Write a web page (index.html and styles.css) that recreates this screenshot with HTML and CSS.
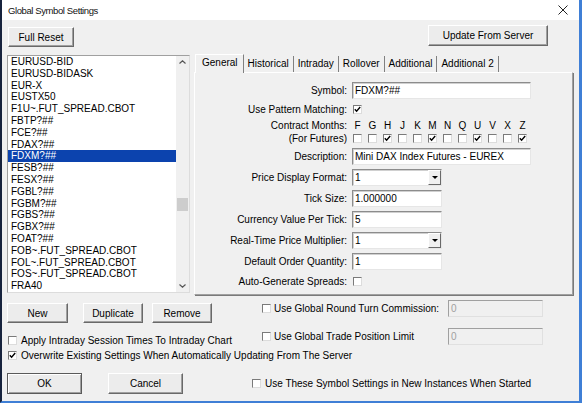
FILE: index.html
```html
<!DOCTYPE html>
<html>
<head>
<meta charset="utf-8">
<title>Global Symbol Settings</title>
<link rel="stylesheet" href="styles.css">
</head>
<body>
<div class="window">
  <div class="titlebar">
    <span class="title">Global Symbol Settings</span>
    <svg class="close" width="10" height="10" viewBox="0 0 10 10"><path d="M0.5 0.5L9.5 9.5M9.5 0.5L0.5 9.5" stroke="#222" stroke-width="1" fill="none"/></svg>
  </div>
  <div class="client">
    <div class="toprow">
      <div class="btn btn-reset">Full Reset</div>
      <div class="btn btn-update">Update From Server</div>
    </div>
    <div class="mainrow">
      <div class="listbox">
        <div class="items">
          <div class="item">EURUSD-BID</div>
          <div class="item">EURUSD-BIDASK</div>
          <div class="item">EUR-X</div>
          <div class="item">EUSTX50</div>
          <div class="item">F1U~.FUT_SPREAD.CBOT</div>
          <div class="item">FBTP?##</div>
          <div class="item">FCE?##</div>
          <div class="item">FDAX?##</div>
          <div class="item sel">FDXM?##</div>
          <div class="item">FESB?##</div>
          <div class="item">FESX?##</div>
          <div class="item">FGBL?##</div>
          <div class="item">FGBM?##</div>
          <div class="item">FGBS?##</div>
          <div class="item">FGBX?##</div>
          <div class="item">FOAT?##</div>
          <div class="item">FOB~.FUT_SPREAD.CBOT</div>
          <div class="item">FOL~.FUT_SPREAD.CBOT</div>
          <div class="item">FOS~.FUT_SPREAD.CBOT</div>
          <div class="item">FRA40</div>
        </div>
        <div class="vscroll">
          <div class="arrow-box"><svg width="7" height="4" viewBox="0 0 7 4"><path d="M0.5 3.5L3.5 0.8L6.5 3.5" stroke="#555" stroke-width="1.2" fill="none"/></svg></div>
          <div class="track"><div class="thumb"></div></div>
          <div class="arrow-box"><svg width="7" height="4" viewBox="0 0 7 4"><path d="M0.5 0.5L3.5 3.2L6.5 0.5" stroke="#555" stroke-width="1.2" fill="none"/></svg></div>
        </div>
      </div>
      <div class="tabs">
        <div class="tabstrip">
          <div class="tab active">General</div>
          <div class="tab">Historical</div>
          <div class="tab">Intraday</div>
          <div class="tab">Rollover</div>
          <div class="tab">Additional</div>
          <div class="tab">Additional 2</div>
        </div>
        <div class="panel">
          <div class="form">
            <div class="lbl">Symbol:</div>
            <div class="val"><div class="field wide">FDXM?##</div></div>

            <div class="lbl">Use Pattern Matching:</div>
            <div class="val"><span class="cb cb-form"><svg width="7" height="7" viewBox="0 0 7 7"><path d="M0.8 3.2L2.6 5.2L6.2 1" stroke="#000" stroke-width="1.4" fill="none"/></svg></span></div>

            <div class="lbl lbl-months"><div>Contract Months:</div><div>(For Futures)</div></div>
            <div class="months">
              <span>F</span><span>G</span><span>H</span><span>J</span><span>K</span><span>M</span><span>N</span><span>Q</span><span>U</span><span>V</span><span>X</span><span>Z</span>
              <span class="cb"></span>
              <span class="cb"></span>
              <span class="cb"><svg width="7" height="7" viewBox="0 0 7 7"><path d="M0.8 3.2L2.6 5.2L6.2 1" stroke="#000" stroke-width="1.4" fill="none"/></svg></span>
              <span class="cb"></span>
              <span class="cb"></span>
              <span class="cb"><svg width="7" height="7" viewBox="0 0 7 7"><path d="M0.8 3.2L2.6 5.2L6.2 1" stroke="#000" stroke-width="1.4" fill="none"/></svg></span>
              <span class="cb"></span>
              <span class="cb"></span>
              <span class="cb"><svg width="7" height="7" viewBox="0 0 7 7"><path d="M0.8 3.2L2.6 5.2L6.2 1" stroke="#000" stroke-width="1.4" fill="none"/></svg></span>
              <span class="cb"></span>
              <span class="cb"></span>
              <span class="cb"><svg width="7" height="7" viewBox="0 0 7 7"><path d="M0.8 3.2L2.6 5.2L6.2 1" stroke="#000" stroke-width="1.4" fill="none"/></svg></span>
            </div>

            <div class="lbl">Description:</div>
            <div class="val"><div class="field wide">Mini DAX Index Futures - EUREX</div></div>

            <div class="lbl">Price Display Format:</div>
            <div class="val"><div class="combo"><span class="combo-text">1</span><span class="combo-btn"><span class="tri"></span></span></div></div>

            <div class="lbl">Tick Size:</div>
            <div class="val"><div class="field narrow">1.000000</div></div>

            <div class="lbl">Currency Value Per Tick:</div>
            <div class="val"><div class="field narrow">5</div></div>

            <div class="lbl">Real-Time Price Multiplier:</div>
            <div class="val"><div class="combo"><span class="combo-text">1</span><span class="combo-btn"><span class="tri"></span></span></div></div>

            <div class="lbl">Default Order Quantity:</div>
            <div class="val"><div class="field narrow">1</div></div>

            <div class="lbl">Auto-Generate Spreads:</div>
            <div class="val"><span class="cb cb-form"></span></div>
          </div>
        </div>
      </div>
    </div>

    <div class="lower">
      <div class="lower-left">
        <div class="btnrow">
          <div class="btn btn-new">New</div>
          <div class="btn btn-dup">Duplicate</div>
          <div class="btn btn-rem">Remove</div>
        </div>
        <div class="chk-line chk-apply"><span class="cb"></span><span>Apply Intraday Session Times To Intraday Chart</span></div>
      </div>
      <div class="lower-right">
        <div class="grow grow-first">
          <div class="chk-line tight"><span class="cb"></span><span>Use Global Round Turn Commission:</span></div>
          <div class="dis-field">0</div>
        </div>
        <div class="grow grow-second">
          <div class="chk-line tight"><span class="cb"></span><span>Use Global Trade Position Limit</span></div>
          <div class="dis-field">0</div>
        </div>
      </div>
    </div>

    <div class="chk-line chk-overwrite"><span class="cb"><svg width="7" height="7" viewBox="0 0 7 7"><path d="M0.8 3.2L2.6 5.2L6.2 1" stroke="#000" stroke-width="1.4" fill="none"/></svg></span><span>Overwrite Existing Settings When Automatically Updating From The Server</span></div>

    <div class="bottomrow">
      <div class="btn btn-ok">OK</div>
      <div class="btn btn-cancel">Cancel</div>
      <div class="chk-line chk-instances"><span class="cb"></span><span>Use These Symbol Settings in New Instances When Started</span></div>
    </div>
  </div>
</div>
</body>
</html>
```

FILE: styles.css
```css
* { box-sizing: border-box; }
html, body { margin: 0; padding: 0; }
body {
  width: 582px;
  height: 403px;
  overflow: hidden;
  font-family: "Liberation Sans", Arial, sans-serif;
  font-size: 10px;
  color: #000;
  background: #f0f0f0;
}
.window {
  width: 582px;
  height: 403px;
  display: flex;
  flex-direction: column;
  border-left: 2px solid #17233d;
  border-right: 3px solid #3f7fd6;
  border-bottom: 2px solid #3f7fd6;
  background: #f0f0f0;
}
.titlebar {
  height: 20px;
  flex: none;
  background: #fff;
  display: flex;
  align-items: center;
  padding-left: 6px;
}
.title { font-size: 9.5px; letter-spacing: -0.4px; color: #111; }
.close { margin-left: auto; margin-right: 11px; }

.client { flex: 1; padding-left: 5px; }

.btn {
  display: flex;
  align-items: center;
  justify-content: center;
  background: #ececec;
  border: 1px solid;
  border-color: #fff #696969 #696969 #fff;
  box-shadow: inset -1px -1px 0 #a0a0a0;
  white-space: nowrap;
}

.toprow { display: flex; align-items: flex-start; height: 34px; }
.btn-reset { margin: 7px 0 0 1px; width: 66px; height: 20px; }
.btn-update { margin: 5px 31px 0 auto; width: 120px; height: 21px; }

.mainrow { display: flex; height: 241px; }
.listbox {
  margin-top: 1px;
  width: 183px;
  height: 238px;
  display: flex;
  border: 1px solid;
  border-color: #a0a0a0 #dcdcdc #dcdcdc #a0a0a0;
  background: #fff;
}
.items { flex: 1; overflow: hidden; }
.item { height: 11.8px; line-height: 11.8px; padding-left: 3px; white-space: nowrap; }
.item.sel { background: #0c43ae; color: #fff; }
.vscroll {
  width: 13px;
  flex: none;
  background: #f0f0f0;
  display: flex;
  flex-direction: column;
}
.arrow-box { height: 12px; flex: none; display: flex; align-items: center; justify-content: center; }
.track { flex: 1; }
.thumb { margin: 130px auto 0; width: 11px; height: 13px; background: #cdcdcd; }

.tabs { margin-left: 4px; width: 379px; display: flex; flex-direction: column; }
.tabstrip {
  height: 18px;
  flex: none;
  display: flex;
  align-items: flex-end;
  padding-left: 1px;
  position: relative;
  z-index: 1;
}
.tab {
  height: 16px;
  line-height: 15px;
  padding: 0 4px;
  border-right: 1px solid #808080;
  white-space: nowrap;
}
.tab.active {
  height: 19px;
  margin-bottom: -1px;
  padding: 0 5px 0 6px;
  border-left: 1px solid #fff;
  border-top: 1px solid #fff;
  line-height: 15px;
  background: #f0f0f0;
}
.panel {
  height: 223px;
  border: 1px solid;
  border-color: #fff #a0a0a0 #a0a0a0 #fff;
  box-shadow: 1px 1px 0 #7a7a7a;
}
.form {
  display: grid;
  grid-template-columns: 152px 1fr;
  column-gap: 5px;
  grid-template-rows: 19px 18px 28px 21px 21px 21px 21px 21px 21px 18px;
  align-items: center;
  padding-top: 8px;
}
.lbl { text-align: right; white-space: nowrap; }
.lbl-months { align-self: stretch; padding-top: 1px; line-height: 13px; }
.val { display: flex; align-items: center; }
.field {
  height: 17px;
  background: #fff;
  border: 1px solid;
  border-color: #8c8c8c #e6e6e6 #e6e6e6 #8c8c8c;
  box-shadow: inset 1px 1px 0 #d0d0d0;
  padding-left: 2px;
  line-height: 15px;
  white-space: nowrap;
  overflow: hidden;
}
.field.wide { width: 179px; }
.field.narrow { width: 90px; }
.combo {
  width: 90px;
  height: 17px;
  display: flex;
  background: #fff;
  border: 1px solid;
  border-color: #8c8c8c #e6e6e6 #e6e6e6 #8c8c8c;
  box-shadow: inset 1px 1px 0 #d0d0d0;
}
.combo-text { padding-left: 2px; line-height: 15px; }
.combo-btn {
  margin-left: auto;
  width: 13px;
  height: 15px;
  background: #f0f0f0;
  border: 1px solid;
  border-color: #fff #696969 #696969 #fff;
  display: flex;
  align-items: center;
  justify-content: center;
}
.tri {
  width: 0;
  height: 0;
  border-left: 3px solid transparent;
  border-right: 3px solid transparent;
  border-top: 3px solid #000;
}

.cb {
  width: 9px;
  height: 9px;
  flex: none;
  background: #fff;
  border: 1px solid;
  border-color: #7a7a7a #dcdcdc #dcdcdc #7a7a7a;
  display: flex;
  align-items: center;
  justify-content: center;
}
.cb-form { margin-left: 1px; }
.months {
  display: grid;
  grid-template-columns: repeat(12, 15px);
  grid-template-rows: 13px 13px;
  align-items: center;
  justify-items: center;
  align-self: stretch;
  margin-left: -2px;
  padding-top: 1px;
}

.lower { display: grid; grid-template-columns: 255px 1fr; height: 52px; }
.lower-left { display: flex; flex-direction: column; }
.btnrow { display: flex; margin-top: 8px; }
.btn-new { width: 61px; height: 20px; }
.btn-dup { width: 60px; height: 20px; margin-left: 15px; }
.btn-rem { width: 60px; height: 20px; margin-left: 9px; }
.chk-line { display: flex; align-items: center; gap: 4px; height: 14px; white-space: nowrap; }
.chk-line.tight { gap: 3px; }
.chk-apply { margin-top: 10px; margin-left: 1px; }
.lower-right { display: flex; flex-direction: column; }
.grow { display: grid; grid-template-columns: 186px 95px; height: 17px; align-items: center; }
.grow-first { margin-top: 5px; }
.grow-second { margin-top: 11px; }
.dis-field {
  height: 17px;
  background: #f0f0f0;
  border: 1px solid;
  border-color: #a0a0a0 #e0e0e0 #e0e0e0 #a0a0a0;
  color: #a0a0a0;
  padding-left: 2px;
  line-height: 15px;
}
.chk-overwrite { margin-top: 1px; margin-left: 1px; }

.bottomrow { display: flex; align-items: center; margin-top: 11px; }
.btn-ok {
  width: 75px;
  height: 21px;
  border: 1px solid #5a5a5a;
  box-shadow: inset 1px 1px 0 #fff, inset -1px -1px 0 #a0a0a0;
}
.btn-cancel { width: 75px; height: 21px; margin-left: 26px; }
.chk-instances { margin-left: 69px; }
```
